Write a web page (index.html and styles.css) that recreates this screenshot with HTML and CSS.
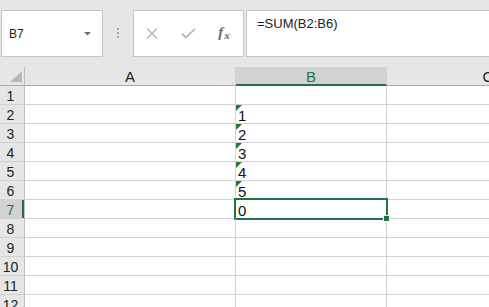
FILE: index.html
```html
<!DOCTYPE html>
<html>
<head>
<meta charset="utf-8">
<link rel="stylesheet" href="styles.css">
</head>
<body>
<div class="toolbar">
  <div class="namebox">
    <span class="ref">B7</span>
    <svg class="dd" width="8" height="4" viewBox="0 0 8 4"><polygon points="0,0 7,0 3.5,3.5" fill="#6f6f6f"/></svg>
  </div>
  <div class="grip"><i></i><i></i><i></i></div>
  <div class="fnbox">
    <span class="slot"><svg width="12" height="11" viewBox="0 0 12 11"><path d="M1 0.5 L11 10.5 M11 0.5 L1 10.5" stroke="#b9b9b9" stroke-width="1.4" fill="none"/></svg></span>
    <span class="slot"><svg width="15" height="11" viewBox="0 0 15 11"><path d="M0.8 5.5 L4.8 9.5 L14 0.8" stroke="#b9b9b9" stroke-width="1.8" fill="none"/></svg></span>
    <span class="slot fx"><i class="f">f</i><i class="x">x</i></span>
  </div>
  <div class="formula">=SUM(B2:B6)</div>
</div>
<div class="sheet">
  <div class="hd corner"><svg width="12" height="11" viewBox="0 0 12 11"><polygon points="12,0 12,11 0,11" fill="#b7b7b7"/></svg></div>
  <div class="hd col">A</div>
  <div class="hd col sel">B</div>
  <div class="hd col c">C</div>

  <div class="rh">1</div><div class="cell"></div><div class="cell"></div><div class="cell"></div>
  <div class="rh">2</div><div class="cell"></div><div class="cell num">1</div><div class="cell"></div>
  <div class="rh">3</div><div class="cell"></div><div class="cell num">2</div><div class="cell"></div>
  <div class="rh">4</div><div class="cell"></div><div class="cell num">3</div><div class="cell"></div>
  <div class="rh">5</div><div class="cell"></div><div class="cell num">4</div><div class="cell"></div>
  <div class="rh">6</div><div class="cell"></div><div class="cell num">5</div><div class="cell"></div>
  <div class="rh sel">7</div><div class="cell"></div><div class="cell active">0<span class="handle"></span></div><div class="cell"></div>
  <div class="rh">8</div><div class="cell"></div><div class="cell"></div><div class="cell"></div>
  <div class="rh">9</div><div class="cell"></div><div class="cell"></div><div class="cell"></div>
  <div class="rh">10</div><div class="cell"></div><div class="cell"></div><div class="cell"></div>
  <div class="rh">11</div><div class="cell"></div><div class="cell"></div><div class="cell"></div>
  <div class="rh">12</div><div class="cell"></div><div class="cell"></div><div class="cell"></div>
</div>
</body>
</html>
```
FILE: styles.css
```css
*, *::before, *::after { box-sizing: border-box; }
html, body { margin: 0; padding: 0; }
body {
  background: #e6e6e6;
  font-family: "Liberation Sans", Arial, sans-serif;
  overflow: hidden;
  width: 489px;
  height: 307px;
}
.toolbar {
  display: flex;
  height: 67px;
  padding: 10px 0 10px 1px;
}
.namebox {
  width: 102px;
  height: 47px;
  background: #fff;
  border: 1px solid #c6c6c6;
  display: flex;
  align-items: center;
  padding-left: 7px;
  padding-right: 10px;
  justify-content: space-between;
}
.ref { font-size: 12px; color: #222; }
.dd { margin-top: 1px; }
.grip {
  width: 30px;
  display: flex;
  flex-direction: column;
  align-items: center;
  padding-top: 18px;
  gap: 2px;
}
.grip i {
  display: block;
  width: 2px;
  height: 2px;
  background: #a9a9a9;
}
.fnbox {
  width: 111px;
  height: 47px;
  background: #fff;
  border: 1px solid #c6c6c6;
  display: flex;
  align-items: center;
}
.slot {
  width: 36px;
  display: flex;
  justify-content: center;
  align-items: center;
}
.fx {
  font-family: "Liberation Serif", "Times New Roman", serif;
  color: #6a6a6a;
  font-weight: bold;
  padding-bottom: 2px;
}
.fx .f { font-size: 15px; }
.fx .x { font-size: 11px; position: relative; top: 2px; margin-left: 1px; }
.formula {
  flex: 1;
  margin-left: 2px;
  margin-right: -10px;
  height: 47px;
  background: #fff;
  border: 1px solid #c6c6c6;
  font-size: 13px;
  line-height: 15px;
  padding: 5px 0 0 10px;
  color: #222;
}
.sheet {
  display: grid;
  grid-template-columns: 25px 211px 151px 203px;
  grid-auto-rows: 19px;
  width: 590px;
  background: #fff;
}
.hd {
  background: #e6e6e6;
  border-bottom: 1px solid #ababab;
  border-right: 1px solid #d0d0d0;
  font-size: 15px;
  line-height: 17px;
  padding-top: 1px;
  text-align: center;
  color: #222;
}
.hd.corner {
  padding: 4px 0 0 10px;
  text-align: left;
  border-right-color: #bdbdbd;
}
.hd.corner svg { display: block; }
.hd.col.sel {
  background: #d2d2d2;
  color: #217346;
  border-bottom: 2px solid #217346;
}
.rh {
  background: #e6e6e6;
  border-right: 1px solid #bdbdbd;
  border-bottom: 1px solid #d2d2d2;
  font-size: 14px;
  line-height: 17px;
  padding: 2px 3px 0 0;
  text-align: center;
  color: #222;
}
.rh.sel {
  background: #d2d2d2;
  color: #217346;
  box-shadow: inset -2px 0 0 #217346;
}
.cell {
  position: relative;
  border-right: 1px solid #d4d4d4;
  border-bottom: 1px solid #d4d4d4;
  font-size: 15px;
  line-height: 17px;
  padding: 2px 0 0 2px;
  color: #111;
}
.cell.num::before {
  content: "";
  position: absolute;
  left: 0;
  top: 0;
  border-top: 6px solid #1e7a3c;
  border-right: 6px solid transparent;
  width: 0;
  height: 0;
}
.cell.active::after {
  content: "";
  position: absolute;
  left: -2px;
  top: -2px;
  width: 154px;
  height: 22px;
  border: 2px solid #217346;
}
.handle {
  position: absolute;
  left: 147px;
  top: 15px;
  width: 7px;
  height: 7px;
  background: #217346;
  border: 1px solid #fff;
  z-index: 2;
}
```
